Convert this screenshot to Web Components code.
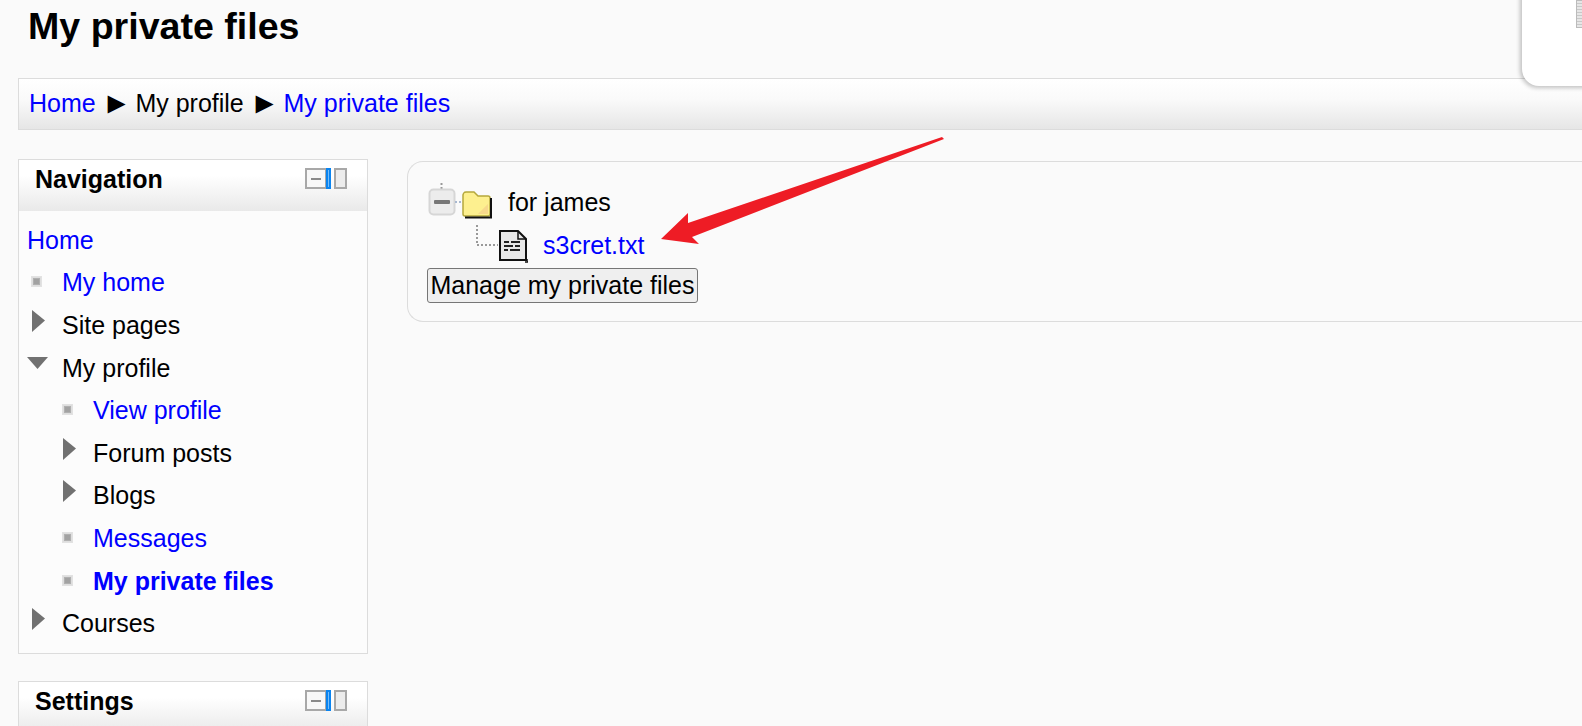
<!DOCTYPE html>
<html lang="en"><head><meta charset="utf-8"><title>My private files</title>
<style>
html,body{margin:0;padding:0;height:726px;overflow:hidden;background:#fafafa}
body{font:25px/1.2 "Liberation Sans",Arial,sans-serif;color:#000}
</style></head><body>
<moodle-page>
  <moodle-heading slot="heading">My private files</moodle-heading>
  <moodle-crumbs slot="crumbs">
    <a href="#">Home</a><span class="sep">►</span><span>My profile</span><span class="sep">►</span><a href="#">My private files</a>
  </moodle-crumbs>
  <moodle-block slot="side" title-text="Navigation">
    <nav-item kind="none"><a href="#">Home</a></nav-item>
    <nav-item kind="leaf" level="0"><a href="#">My home</a></nav-item>
    <nav-item kind="closed" level="0">Site pages</nav-item>
    <nav-item kind="open" level="0">My profile</nav-item>
    <nav-item kind="leaf" level="1"><a href="#">View profile</a></nav-item>
    <nav-item kind="closed" level="1">Forum posts</nav-item>
    <nav-item kind="closed" level="1">Blogs</nav-item>
    <nav-item kind="leaf" level="1"><a href="#">Messages</a></nav-item>
    <nav-item kind="leaf" level="1"><a href="#"><b>My private files</b></a></nav-item>
    <nav-item kind="closed" level="0">Courses</nav-item>
  </moodle-block>
  <moodle-block slot="side" title-text="Settings"></moodle-block>
  <moodle-files slot="main"></moodle-files>
</moodle-page>
<script>
const linkCss='a{color:#00f;text-decoration:none}';
function shadow(el,html){el.attachShadow({mode:'open'}).innerHTML=html}
customElements.define('moodle-page',class extends HTMLElement{constructor(){super();shadow(this,`<style>
:host{display:block;position:relative;width:1582px;height:726px;overflow:hidden;background:#fafafa}
.wrap{width:1640px;padding:0 0 0 18px;box-sizing:border-box}
.cols{display:flex;align-items:flex-start;gap:39px;margin-top:29px}
.side{width:350px;flex:none;display:flex;flex-direction:column;gap:27px}
.main{flex:1;margin-top:3px}
.panel{position:absolute;right:-20px;top:-20px;width:80px;height:106px;background:#fff;border-radius:0 0 0 17px;box-shadow:-1px 1px 4px 1px rgba(0,0,0,.24)}
.sb{position:absolute;right:0;top:0;width:6px;height:28px;background:repeating-linear-gradient(#e6e6e6 0 2px,#c8c8c8 2px 3px);border:1px solid #bbb;border-right:0;box-sizing:border-box}
.arrow{position:absolute;left:0;top:0;pointer-events:none}
</style><div class="wrap"><slot name="heading"></slot><slot name="crumbs"></slot><div class="cols"><div class="side"><slot name="side"></slot></div><div class="main"><slot name="main"></slot></div></div></div>
<div class="panel"></div><div class="sb"></div>
<svg class="arrow" width="1582" height="726"><polygon points="942,137 944,139 692,237 699,244 661,239 688,213 688,223" fill="#ee1c25"/></svg>`)}});
customElements.define('moodle-heading',class extends HTMLElement{constructor(){super();shadow(this,`<style>:host{display:block;height:78px;box-sizing:border-box;padding:4px 0 0 10px;font:bold 37.6px/44px "Liberation Sans",Arial,sans-serif}</style><slot></slot>`)}});
customElements.define('moodle-crumbs',class extends HTMLElement{constructor(){super();shadow(this,`<style>:host{display:flex;align-items:center;gap:10px;height:52px;box-sizing:border-box;padding:0 0 2px 10px;border:1px solid #dcdcdc;background:linear-gradient(#fff 0,#fafafa 40%,#e6e6e6 100%);font-size:25px}
::slotted(a){color:#00f;text-decoration:none}::slotted(.sep){font-size:30px;line-height:1;margin:0 -6px 0 -4px}</style><slot></slot>`)}});
customElements.define('block-controls',class extends HTMLElement{constructor(){super();shadow(this,`<style>:host{display:block;width:42px;height:21px}svg{display:block}</style><svg width="42" height="21">
<rect x="1" y="1" width="20" height="19" fill="#f8f8f8" stroke="#a8a8a8" stroke-width="2"/><rect x="6" y="10" width="10" height="2" fill="#8a8a8a"/>
<rect x="22" y="1" width="3" height="19" fill="#77bdf8" stroke="#0a84f0" stroke-width="2"/>
<rect x="30" y="1" width="11" height="19" fill="#ececec" stroke="#a8a8a8" stroke-width="2"/></svg>`)}});
customElements.define('moodle-block',class extends HTMLElement{constructor(){super();const t=this.getAttribute('title-text');shadow(this,`<style>:host{display:block;border:1px solid #dcdcdc;background:#fcfcfc}
.h{height:51px;box-sizing:border-box;display:flex;align-items:flex-start;justify-content:space-between;padding:4px 20px 0 16px;background:linear-gradient(#fff 0,#fff 30%,#e9e9e9 100%)}
.t{font:bold 25px/30px "Liberation Sans",Arial,sans-serif}
block-controls{margin-top:4px}
.c{padding:7.6px 0 8.4px}</style><div class="h"><span class="t">${t}</span><block-controls></block-controls></div><div class="c"><slot></slot></div>`)}});
customElements.define('tree-icon',class extends HTMLElement{constructor(){super();const k=this.getAttribute('kind');
const d={leaf:'<rect x="4.5" y="5.5" width="10" height="10" fill="#dedede" stroke="#e2e2e2"/><rect x="6.5" y="7.5" width="6" height="6" fill="#a2a2a2" stroke="#b0b0b0"/>',
closed:'<polygon points="5,0 18,10.5 5,22" fill="#717171"/>',
open:'<polygon points="0,5 21,5 10.5,17" fill="#717171"/>'}[k]||'';
shadow(this,`<style>:host{display:block;width:22px;height:22px}svg{display:block;overflow:visible}</style><svg width="22" height="22">${d}</svg>`)}});
customElements.define('nav-item',class extends HTMLElement{constructor(){super();const k=this.getAttribute('kind'),l=+this.getAttribute('level')||0;
const ic=k==='none'?'':`<tree-icon kind="${k}"></tree-icon>`;
shadow(this,`<style>:host{display:flex;align-items:center;height:42.6px;font-size:25px;padding-left:${k==='none'?8:8+31*l}px}
tree-icon{margin-right:13px}
tree-icon[kind=open]{margin-top:-10px}
tree-icon[kind=closed]{margin-top:-8px}
::slotted(a){color:#00f;text-decoration:none}</style>${ic}<span><slot></slot></span>`)}});
customElements.define('moodle-files',class extends HTMLElement{constructor(){super();shadow(this,`<style>${linkCss}
:host{display:block;height:161px;margin-top:-1px;box-sizing:border-box;border:1px solid #dcdcdc;border-right:0;border-radius:16px 0 0 16px;padding:20px 0 0 20px;background:#fafafa}
.r{display:flex;align-items:center}
.r1{height:43px}.r2{height:43px}
.r span,.r a{position:relative;top:-2px}
svg{display:block;flex:none}
button{display:block;margin:0 0 0 -1px;width:271px;height:35px;padding:0;box-sizing:border-box;background:#efefef;border:1px solid #767676;border-radius:3px;font:25px "Liberation Sans",Arial,sans-serif;color:#000;white-space:nowrap}
.r1 span{margin-left:15px}
</style>
<div class="r r1"><svg width="65" height="43" viewBox="0 0 65 43">
<path d="M13.5 1V7" stroke="#999" stroke-width="2" stroke-dasharray="2 2"/>
<rect x="1.5" y="7.5" width="25" height="25" rx="4" fill="#ececec" stroke="#d6d6d6" stroke-width="2"/>
<rect x="6" y="18" width="16" height="4" rx="1" fill="#777"/>
<path d="M27 20H33" stroke="#a9b9d0" stroke-width="2" stroke-dasharray="2 2"/>
<path d="M35 13c0-1 1-3 3-3h8l4 4h10c1 0 2 1 2 2v16c0 1-1 2-2 2H37c-1 0-2-1-2-2z" fill="#fdf08f" stroke="#b5a83c" stroke-width="1.5"/>
<path d="M50 32l10-10v10z" fill="#f3c98a" opacity=".6"/>
<path d="M37 35.5H63V16" fill="none" stroke="#111" stroke-width="2"/>
</svg><span>for james</span></div>
<div class="r r2"><svg width="100" height="43" viewBox="0 0 100 43">
<path d="M49 0V20H70" fill="none" stroke="#999" stroke-width="2" stroke-dasharray="2 2"/>
<path d="M72 6H90L98 14V35H72Z" fill="#e8e8e8" stroke="#111" stroke-width="2"/>
<path d="M90 6V14H98" fill="none" stroke="#111" stroke-width="1.5"/>
<path d="M76 17h5M83 17h9M76 21h9M87 21h5M76 25h4M82 25h10" stroke="#222" stroke-width="2"/>
<path d="M97 37H100V34" fill="none" stroke="#111" stroke-width="1.5"/>
</svg><a href="#" style="margin-left:15px">s3cret.txt</a></div>
<button type="button">Manage my private files</button>`)}});
</script>
</body></html>
